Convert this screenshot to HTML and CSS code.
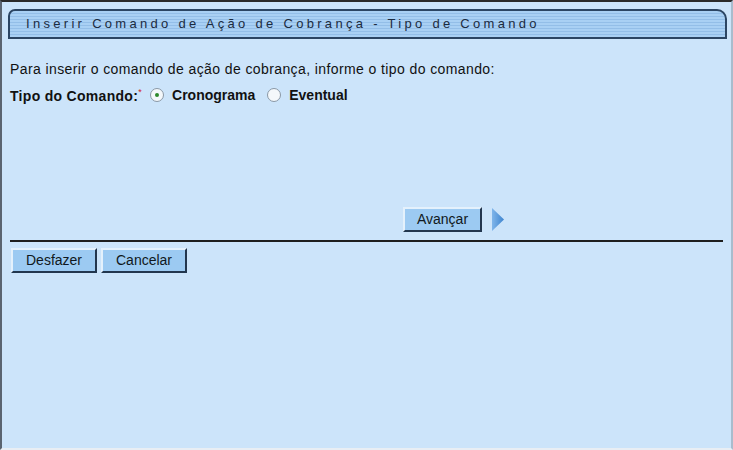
FILE: index.html
```html
<!DOCTYPE html>
<html lang="pt-BR">
<head>
<meta charset="UTF-8">
<title>Inserir Comando de Ação de Cobrança</title>
<link rel="stylesheet" href="styles.css">
</head>
<body>

<div class="frame">

  <!-- barra de titulo -->
  <div class="titlebar">Inserir Comando de Ação de Cobrança - Tipo de Comando</div>

  <div class="content">
    <p class="intro">Para inserir o comando de ação de cobrança, informe o tipo do comando:</p>

    <div class="field">
      <span class="label">Tipo do Comando:<sup>*</sup></span>
      <label class="radio"><span class="dot checked"></span>Cronograma</label>
      <label class="radio"><span class="dot"></span>Eventual</label>
    </div>

    <div class="next-row">
      <button class="btn">Avançar</button>
      <svg class="arrow" width="14" height="25" viewBox="0 0 14 25">
        <defs>
          <linearGradient id="ag" x1="0" y1="0" x2="1" y2="0">
            <stop offset="0" stop-color="#7fb5ea"/>
            <stop offset="1" stop-color="#3f85cf"/>
          </linearGradient>
        </defs>
        <polygon points="1,1 13,12.5 1,24" fill="url(#ag)"/>
      </svg>
    </div>

    <hr class="rule">

    <div class="actions">
      <button class="btn">Desfazer</button>
      <button class="btn">Cancelar</button>
    </div>
  </div>

</div>

</body>
</html>
```

FILE: styles.css
```css
body { margin: 0; background: #cce4fa; font-family: "Liberation Sans", Arial, sans-serif; }
.frame {
  height: 450px;
  box-sizing: border-box;
  border-top: 2px solid #2a2a2a;
  border-left: 2px solid #5a6470;
  border-right: 2px solid #a9bccd;
  border-bottom: 2px solid #e8eef4;
  padding: 7px 4px 0 6px;
}
.titlebar {
  height: 26px;
  line-height: 26px;
  border: 2px solid #2b4563;
  border-radius: 7px 10px 0 0;
  background: repeating-linear-gradient(#a9d0f4 0px, #a9d0f4 2px, #93bee8 2px, #93bee8 3px);
  color: #1b2b40;
  font-size: 13px;
  letter-spacing: 3.3px;
  padding-left: 16px;
  white-space: nowrap;
}
.content { padding: 0 4px 0 2px; }
.intro {
  margin: 22px 0 0 0;
  font-size: 14px;
  letter-spacing: 0.4px;
  color: #111;
}
.field {
  display: flex;
  align-items: center;
  margin-top: 10px;
  font-size: 14px;
  color: #111;
}
.label { font-weight: bold; letter-spacing: 0.3px; margin-right: 8px; }
.label sup { color: #d0211b; font-weight: normal; font-size: 9px; }
.radio { display: flex; align-items: center; font-weight: bold; margin-right: 12px; }
.dot {
  width: 14px;
  height: 14px;
  border-radius: 50%;
  border: 1px solid #8a98a6;
  background: #f4f8fb;
  margin-right: 8px;
  position: relative;
  box-sizing: border-box;
}
.dot.checked::after {
  content: "";
  position: absolute;
  left: 4px;
  top: 4px;
  width: 4px;
  height: 4px;
  border-radius: 50%;
  background: #2d8a2d;
}
.next-row {
  display: flex;
  align-items: center;
  gap: 9px;
  margin-top: 103px;
  padding-left: 393px;
}
.btn {
  font-family: "Liberation Sans", Arial, sans-serif;
  font-size: 14px;
  color: #101820;
  background: #9ccaf2;
  border: 2px solid;
  border-color: #e4f1fc #22364e #22364e #e4f1fc;
  padding: 2px 8px 3px;
  height: 25px;
}
.next-row .btn { width: 79px; }
.rule {
  margin: 8px 0 0 0;
  border: none;
  border-top: 2px solid #1e1e1e;
}
.actions { display: flex; gap: 4px; margin-top: 6px; padding-left: 1px; }
.actions .btn { width: 86px; }
```
